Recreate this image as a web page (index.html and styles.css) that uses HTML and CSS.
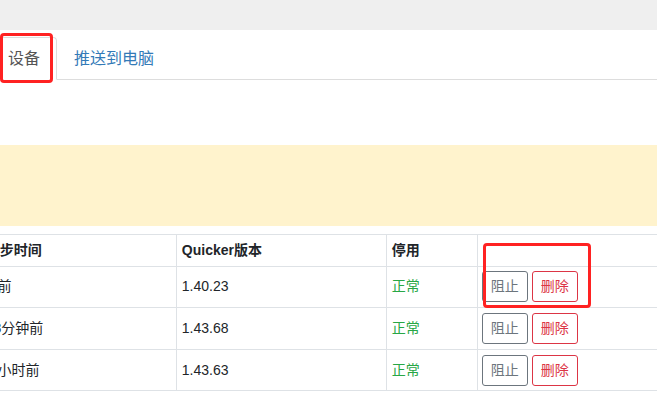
FILE: index.html
```html
<!DOCTYPE html>
<html lang="zh-CN">
<head>
<meta charset="utf-8">
<title>设备</title>
<link rel="stylesheet" href="styles.css">
</head>
<body>
<div class="topbar"></div>
<div class="page">
  <ul class="tabs">
    <li class="tab active"><a class="tab-link">设备</a></li>
    <li class="tab"><a class="tab-link">推送到电脑</a></li>
  </ul>
  <div class="alert"></div>
  <table class="devices">
    <colgroup>
      <col class="c-time">
      <col class="c-ver">
      <col class="c-state">
      <col class="c-act">
    </colgroup>
    <thead>
      <tr><th>同步时间</th><th>Quicker版本</th><th>停用</th><th></th></tr>
    </thead>
    <tbody>
      <tr>
        <td>1 前</td><td>1.40.23</td><td class="ok">正常</td>
        <td><div class="actions"><button class="btn btn-gray">阻止</button><button class="btn btn-red">删除</button></div></td>
      </tr>
      <tr>
        <td>18分钟前</td><td>1.43.68</td><td class="ok">正常</td>
        <td><div class="actions"><button class="btn btn-gray">阻止</button><button class="btn btn-red">删除</button></div></td>
      </tr>
      <tr>
        <td>1 小时前</td><td>1.43.63</td><td class="ok">正常</td>
        <td><div class="actions"><button class="btn btn-gray">阻止</button><button class="btn btn-red">删除</button></div></td>
      </tr>
    </tbody>
  </table>
</div>
<div class="mark mark-tab"></div>
<div class="mark mark-actions"></div>
</body>
</html>
```

FILE: styles.css
```css
html, body {
  margin: 0;
  padding: 0;
  background: #ffffff;
}
body {
  position: relative;
  width: 657px;
  height: 405px;
  overflow: hidden;
  font-family: "Liberation Sans", "Noto Sans CJK SC", sans-serif;
  font-size: 14px;
  color: #212529;
}
.topbar {
  height: 30px;
  background: #efefef;
}
.page {
  margin-left: -20px;
  width: 720px;
}
.tabs {
  list-style: none;
  margin: 0;
  padding: 7px 0 0 12px;
  display: flex;
  border-bottom: 1px solid #dddddd;
}
.tab {
  margin-bottom: -1px;
}
.tab-link {
  display: block;
  margin-right: 1px;
  padding: 10px 16px 10px 15px;
  font-size: 16px;
  line-height: 21px;
  color: #337ab7;
  border: 1px solid transparent;
  border-radius: 4px 4px 0 0;
}
.tab.active .tab-link {
  color: #555555;
  background: #ffffff;
  border-color: #dddddd #dddddd transparent;
}
.alert {
  margin-top: 65px;
  margin-left: 20px;
  height: 81px;
  background: #fff3cd;
}
.devices {
  margin-top: 8px;
  width: 720px;
  table-layout: fixed;
  border-collapse: collapse;
}
.c-time { width: 196px; }
.c-ver { width: 210px; }
.c-state { width: 91px; }
.devices th,
.devices td {
  border: 1px solid #dee2e6;
  padding: 4.8px;
  line-height: 21px;
  text-align: left;
  vertical-align: middle;
  white-space: nowrap;
}
.devices th {
  font-weight: bold;
}
.ok {
  color: #28a745;
}
.actions {
  display: flex;
  gap: 4px;
  margin-left: -1px;
}
.btn {
  font-family: inherit;
  font-size: 14px;
  line-height: 21px;
  padding: 4px 8px;
  background: #ffffff;
  border: 1px solid;
  border-radius: 3px;
}
.btn-gray {
  color: #6c757d;
  border-color: #6c757d;
}
.btn-red {
  color: #dc3545;
  border-color: #dc3545;
}
.mark {
  position: absolute;
  border: 3px solid #ff2222;
  border-radius: 4px;
  box-sizing: border-box;
}
.mark-tab {
  left: 0;
  top: 33px;
  width: 53px;
  height: 50px;
}
.mark-actions {
  left: 483px;
  top: 243px;
  width: 108px;
  height: 65px;
}
```
